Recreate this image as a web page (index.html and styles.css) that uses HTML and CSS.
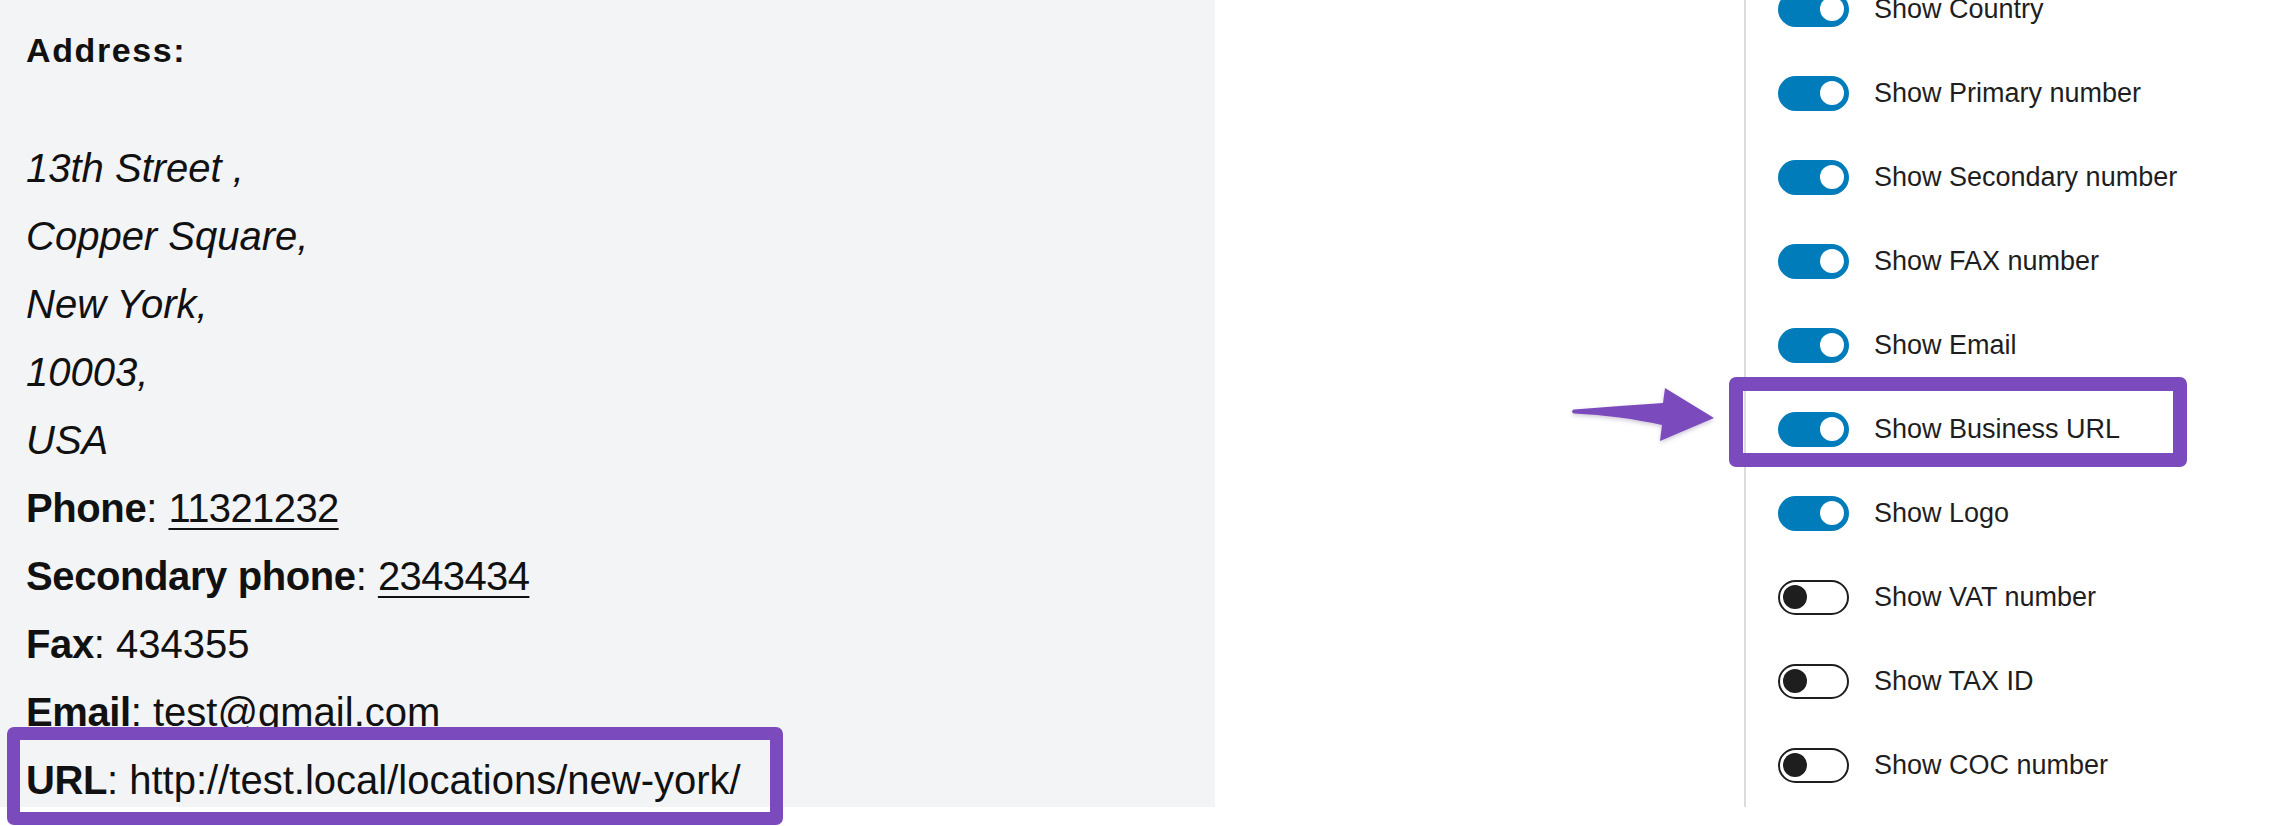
FILE: index.html
```html
<!DOCTYPE html>
<html lang="en">
<head>
<meta charset="utf-8">
<title>Location preview and settings</title>
<link rel="stylesheet" href="styles.css">
</head>
<body>
<div class="page">
  <section class="preview">
    <div class="address-label">Address:</div>
    <div class="lines">
      <div class="line italic">13th Street ,</div>
      <div class="line italic">Copper Square,</div>
      <div class="line italic">New York,</div>
      <div class="line italic">10003,</div>
      <div class="line italic">USA</div>
      <div class="line"><b>Phone</b>: <a class="link">11321232</a></div>
      <div class="line"><b>Secondary phone</b>: <a class="link">2343434</a></div>
      <div class="line"><b>Fax</b>: 434355</div>
      <div class="line"><b>Email</b>: test@gmail.com</div>
      <div class="line"><b>URL</b>: http://test.local/locations/new-york/</div>
    </div>
  </section>

  <section class="settings">
    <div class="row"><span class="toggle on"><span class="knob"></span></span><span class="label">Show Country</span></div>
    <div class="row"><span class="toggle on"><span class="knob"></span></span><span class="label">Show Primary number</span></div>
    <div class="row"><span class="toggle on"><span class="knob"></span></span><span class="label">Show Secondary number</span></div>
    <div class="row"><span class="toggle on"><span class="knob"></span></span><span class="label">Show FAX number</span></div>
    <div class="row"><span class="toggle on"><span class="knob"></span></span><span class="label">Show Email</span></div>
    <div class="row"><span class="toggle on"><span class="knob"></span></span><span class="label">Show Business URL</span></div>
    <div class="row"><span class="toggle on"><span class="knob"></span></span><span class="label">Show Logo</span></div>
    <div class="row"><span class="toggle off"><span class="knob"></span></span><span class="label">Show VAT number</span></div>
    <div class="row"><span class="toggle off"><span class="knob"></span></span><span class="label">Show TAX ID</span></div>
    <div class="row"><span class="toggle off"><span class="knob"></span></span><span class="label">Show COC number</span></div>
  </section>

  <div class="highlight highlight-url"></div>
  <div class="highlight highlight-toggle"></div>
  <svg class="arrow" width="150" height="62" viewBox="0 0 150 62" aria-hidden="true">
    <path d="M4 25.5 C 35 23, 65 21, 93 19 L 95 4 L 144 34 L 90 57 L 92 41 C 65 35, 35 31, 4 29.5 C 1.5 29, 1.5 26, 4 25.5 Z" fill="#7b4bbd"/>
  </svg>
</div>
</body>
</html>
```

FILE: styles.css
```css
html, body {
  margin: 0;
  padding: 0;
  background: #ffffff;
}

.page {
  position: relative;
  display: flex;
  align-items: flex-start;
  width: 2286px;
  height: 826px;
  overflow: hidden;
  font-family: "Liberation Sans", Arial, sans-serif;
  color: #111111;
}

.preview {
  box-sizing: border-box;
  width: 1215px;
  height: 807px;
  flex: none;
  background: #f3f4f6;
  padding: 31px 0 0 26px;
  overflow: hidden;
}

.address-label {
  font-size: 34px;
  line-height: 38px;
  font-weight: 700;
  letter-spacing: 1.6px;
}

.lines {
  margin-top: 65px;
}

.line {
  font-size: 40px;
  line-height: 68px;
  white-space: nowrap;
}

.line b {
  font-weight: 700;
  letter-spacing: -0.4px;
}

.italic {
  font-style: italic;
}

.link {
  color: inherit;
  text-decoration: underline;
  text-decoration-thickness: 2px;
  text-underline-offset: 6px;
  letter-spacing: -0.6px;
}

.settings {
  flex: none;
  margin-left: 529px;
  margin-top: -33px;
  padding-left: 32px;
  border-left: 2px solid #dcdcde;
  display: flex;
  flex-direction: column;
}

.row {
  height: 84px;
  display: flex;
  align-items: center;
  gap: 25px;
}

.toggle {
  box-sizing: border-box;
  position: relative;
  width: 71px;
  height: 35px;
  border-radius: 18px;
  display: flex;
  align-items: center;
  flex: none;
}

.toggle.on {
  background: #007cba;
  justify-content: flex-end;
  padding-right: 5px;
}

.toggle.off {
  background: #ffffff;
  border: 2px solid #1e1e1e;
  padding-left: 3px;
}

.knob {
  width: 24px;
  height: 24px;
  border-radius: 50%;
}

.toggle.on .knob {
  background: #ffffff;
}

.toggle.off .knob {
  background: #1e1e1e;
}

.label {
  font-size: 27px;
  color: #1e1e1e;
  white-space: nowrap;
}

.highlight {
  position: absolute;
  box-sizing: border-box;
  border: 13px solid #7b4bbd;
  border-radius: 7px;
}

.highlight-url {
  left: 7px;
  top: 727px;
  width: 776px;
  height: 98px;
}

.highlight-toggle {
  left: 1729px;
  top: 377px;
  width: 458px;
  height: 90px;
  border-width: 14px;
}

.arrow {
  position: absolute;
  left: 1570px;
  top: 384px;
  filter: drop-shadow(0 2px 2px rgba(60, 30, 100, 0.25));
}
```
